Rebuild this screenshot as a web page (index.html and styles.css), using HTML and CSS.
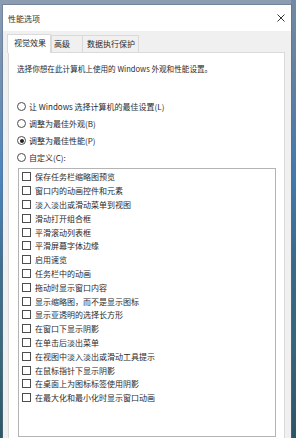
FILE: index.html
```html
<!DOCTYPE html>
<html lang="zh-CN">
<head>
  <meta charset="UTF-8">
  <title>性能选项</title>
  <link rel="stylesheet" href="styles.css">
</head>
<body>
  <div class="window">
    <div class="titlebar">
      <span class="title">性能选项</span>
      <svg class="close" width="8" height="8" viewBox="0 0 8 8">
        <path d="M0.5 0.5 L7.5 7.5 M7.5 0.5 L0.5 7.5" stroke="#333" stroke-width="1" fill="none"/>
      </svg>
    </div>
    <div class="content">
      <div class="tabs">
        <div class="tab active">视觉效果</div>
        <div class="tab">高级</div>
        <div class="tab">数据执行保护</div>
      </div>
      <div class="panel">
        <p class="desc">选择你想在此计算机上使用的 Windows 外观和性能设置。</p>
        <div class="radios">
          <div class="radio"><span class="circle"></span>让 Windows 选择计算机的最佳设置(L)</div>
          <div class="radio"><span class="circle"></span>调整为最佳外观(B)</div>
          <div class="radio"><span class="circle checked"></span>调整为最佳性能(P)</div>
          <div class="radio"><span class="circle"></span>自定义(C):</div>
        </div>
        <div class="list">
          <div class="item"><span class="box"></span>保存任务栏缩略图预览</div>
          <div class="item"><span class="box"></span>窗口内的动画控件和元素</div>
          <div class="item"><span class="box"></span>淡入淡出或滑动菜单到视图</div>
          <div class="item"><span class="box"></span>滑动打开组合框</div>
          <div class="item"><span class="box"></span>平滑滚动列表框</div>
          <div class="item"><span class="box"></span>平滑屏幕字体边缘</div>
          <div class="item"><span class="box"></span>启用速览</div>
          <div class="item"><span class="box"></span>任务栏中的动画</div>
          <div class="item"><span class="box"></span>拖动时显示窗口内容</div>
          <div class="item"><span class="box"></span>显示缩略图，而不是显示图标</div>
          <div class="item"><span class="box"></span>显示亚透明的选择长方形</div>
          <div class="item"><span class="box"></span>在窗口下显示阴影</div>
          <div class="item"><span class="box"></span>在单击后淡出菜单</div>
          <div class="item"><span class="box"></span>在视图中淡入淡出或滑动工具提示</div>
          <div class="item"><span class="box"></span>在鼠标指针下显示阴影</div>
          <div class="item"><span class="box"></span>在桌面上为图标标签使用阴影</div>
          <div class="item"><span class="box"></span>在最大化和最小化时显示窗口动画</div>
        </div>
      </div>
    </div>
  </div>
</body>
</html>
```

FILE: styles.css
```css
* {
  margin: 0;
  padding: 0;
  box-sizing: border-box;
}
html, body {
  width: 296px;
  height: 438px;
  overflow: hidden;
}
body {
  font-family: "Noto Sans CJK SC", "Liberation Sans", sans-serif;
  font-size: 8px;
  color: #2b2b2b;
  padding: 5px 5px 0 3px;
  background:
    linear-gradient(90deg, rgba(0,0,0,0) 0, rgba(0,0,0,0) 291px, rgba(40,80,120,0.25) 291px),
    linear-gradient(180deg, #8c9db1 0%, #6f8fb0 20%, #4b86c0 40%, #3f7190 60%, #3a6a7c 80%, #2e5664 100%);
}
.window {
  width: 288px;
  height: 440px;
  background: #f0f0f0;
  display: flex;
  flex-direction: column;
  box-shadow: 0 0 0 1px rgba(90,110,135,0.5);
}
.titlebar {
  height: 26px;
  background: #fff;
  display: flex;
  align-items: center;
  justify-content: space-between;
  padding: 0 6px 0 5px;
}
.title {
  font-size: 8px;
  color: #333;
}
.content {
  flex: 1;
  display: flex;
  flex-direction: column;
  padding: 3px 6px 0 5px;
}
.tabs {
  display: flex;
  height: 18px;
  position: relative;
  z-index: 1;
}
.tab {
  height: 17px;
  margin-top: 1px;
  padding: 0 7px;
  line-height: 16px;
  background: #f0f0f0;
  border: 1px solid #dadada;
  border-bottom: none;
  margin-left: -1px;
}
.tab:nth-child(2) { width: 32px; padding: 0 0 0 2px; }
.tab:nth-child(3) { width: 57px; padding: 0 0 0 4px; }
.tab.active {
  background: #fff;
  height: 19px;
  margin-top: 0;
  width: 44px;
  padding: 0 0 0 6px;
  margin-left: -1px;
  margin-right: 1px;
}
.panel {
  flex: 1;
  background: #fff;
  border: 1px solid #dadada;
  padding: 10px 8px 0 8px;
  display: flex;
  flex-direction: column;
}
.desc {
  line-height: 12px;
  font-size: 7.6px;
}
.radios {
  margin-top: 23px;
}
.radio {
  height: 17px;
  display: flex;
  align-items: center;
  gap: 3px;
}
.circle {
  width: 9px;
  height: 9px;
  border: 1px solid #4d4d4d;
  border-radius: 50%;
  display: flex;
  align-items: center;
  justify-content: center;
}
.circle.checked::after {
  content: "";
  width: 4px;
  height: 4px;
  border-radius: 50%;
  background: #222;
}
.list {
  flex: 1;
  margin: 2px 0 7px 1px;
  border: 1px solid #b4b4b4;
  padding: 1px 0 0 3px;
}
.item {
  height: 13.8px;
  display: flex;
  align-items: center;
  gap: 4px;
}
.box {
  width: 9px;
  height: 9px;
  border: 1px solid #4d4d4d;
}
```
